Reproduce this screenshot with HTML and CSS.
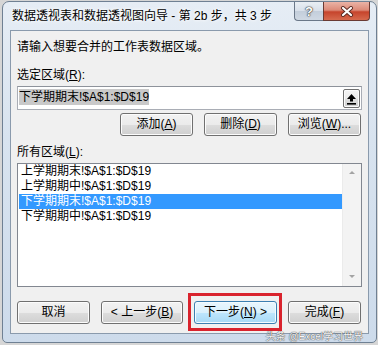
FILE: index.html
```html
<!DOCTYPE html>
<html>
<head>
    <title>数据透视表和数据透视图向导</title>
    <link rel="stylesheet" href="styles.css">
</head>
<body>
    <div class="window">
        <div class="titlebar">
            <span class="title">数据透视表和数据透视图向导 - 第 2b 步，共 3 步</span>
            <div class="caption-buttons">
                <span class="cap help">?</span>
                <span class="cap close">
                    <svg width="14" height="11" viewBox="0 0 14 11">
                        <path d="M3 2 L11 9 M11 2 L3 9" stroke="#5a2a22" stroke-width="4" stroke-linecap="round"/>
                        <path d="M3 2 L11 9 M11 2 L3 9" stroke="#ffffff" stroke-width="2.2" stroke-linecap="round"/>
                    </svg>
                </span>
            </div>
        </div>
        <div class="client">
            <p class="intro">请输入想要合并的工作表数据区域。</p>
            <div class="field-label">选定区域(<u>R</u>):</div>
            <div class="range-input">
                <span class="selected-text">下学期期末!$A$1:$D$19</span>
                <span class="collapse-btn">
                    <svg width="11" height="12" viewBox="0 0 11 12">
                        <path d="M5.5 1 L10 6 L7 6 L7 8.5 L4 8.5 L4 6 L1 6 Z" fill="#000"/>
                        <rect x="1" y="10" width="9" height="1.6" fill="#000"/>
                    </svg>
                </span>
            </div>
            <div class="btn-row top-row">
                <span class="btn">添加(<u>A</u>)</span>
                <span class="btn">删除(<u>D</u>)</span>
                <span class="btn">浏览(<u>W</u>)...</span>
            </div>
            <div class="field-label all-label">所有区域(<u>L</u>):</div>
            <div class="listbox">
                <ul class="items">
                    <li>上学期期末!$A$1:$D$19</li>
                    <li>上学期期中!$A$1:$D$19</li>
                    <li class="selected">下学期期末!$A$1:$D$19</li>
                    <li>下学期期中!$A$1:$D$19</li>
                </ul>
                <div class="scrollbar">
                    <span class="arrow up"></span>
                    <span class="arrow down"></span>
                </div>
            </div>
            <div class="btn-row bottom-row">
                <span class="btn cancel">取消</span>
                <span class="btn back">&lt; 上一步(<u>B</u>)</span>
                <span class="btn next highlighted">下一步(<u>N</u>) &gt;</span>
                <span class="btn">完成(<u>F</u>)</span>
            </div>
        </div>
        <div class="watermark">头条 @Excel学习世界</div>
    </div>
</body>
</html>
```

FILE: styles.css
```css
body {
    margin: 0;
    background-color: #d6d6d6;
    font-family: "Liberation Sans", "Noto Sans CJK SC", sans-serif;
    font-size: 12px;
    color: #000;
}
.window {
    position: relative;
    margin: 1px 0 0 2px;
    width: 375px;
    height: 342px;
    box-sizing: border-box;
    border: 1px solid #6f8093;
    border-radius: 7px 7px 5px 5px;
    background: linear-gradient(180deg, #e6edf5 0%, #d8e3ef 40%, #cddbeb 100%);
    padding: 0 7px 0 7px;
}
.titlebar {
    height: 28px;
    display: flex;
    justify-content: space-between;
    align-items: flex-start;
}
.title {
    margin-top: 6px;
    margin-left: 2px;
    line-height: 16px;
    font-size: 12px;
    text-shadow: 0 0 5px #fff, 0 0 3px #fff;
}
.caption-buttons {
    display: flex;
    margin-right: -1px;
}
.cap {
    height: 19px;
    box-sizing: border-box;
    display: flex;
    align-items: center;
    justify-content: center;
    border: 1px solid #6a7788;
    border-top: none;
}
.help {
    width: 29px;
    border-radius: 0 0 0 4px;
    border-right: none;
    background: linear-gradient(180deg, #e9eef4 0%, #d8e0ea 50%, #c3cedb 51%, #cfd8e3 100%);
    color: #fff;
    font-weight: bold;
    font-size: 13px;
    text-shadow: 0 0 1px #333, 0 0 1px #333, 0 0 2px #555;
}
.close {
    width: 47px;
    border-radius: 0 0 4px 0;
    border-color: #6a3a33;
    background: linear-gradient(180deg, #eab3a6 0%, #dc8a78 45%, #c6442c 55%, #d66a4e 100%);
}
.client {
    height: 304px;
    box-sizing: border-box;
    background-color: #f0f0f0;
    border: 1px solid #8a9aac;
    padding: 0 6px;
}
.intro {
    margin: 9px 0 0 0;
    line-height: 15px;
}
.field-label {
    margin-top: 13px;
    line-height: 15px;
}
.all-label {
    margin-top: 9px;
}
.range-input {
    margin-top: 3px;
    height: 24px;
    box-sizing: border-box;
    border: 1px solid #a9adb5;
    border-top-color: #8e939b;
    background-color: #fff;
    display: flex;
    align-items: flex-start;
    justify-content: space-between;
    padding: 2px 1px 0 1px;
}
.selected-text {
    background-color: #c9c9c9;
    line-height: 16px;
}
.collapse-btn {
    width: 17px;
    height: 19px;
    box-sizing: border-box;
    border: 1px solid #707070;
    border-radius: 2px;
    background: linear-gradient(180deg, #f4f4f4 0%, #ebebeb 50%, #dddddd 51%, #d2d2d2 100%);
    box-shadow: inset 0 0 0 1px #fbfbfb;
    display: flex;
    align-items: center;
    justify-content: center;
}
.btn-row {
    display: flex;
    justify-content: flex-end;
    gap: 11px;
    padding-right: 1px;
}
.top-row {
    margin-top: 3px;
}
.btn {
    width: 73px;
    height: 23px;
    box-sizing: border-box;
    border: 1px solid #707070;
    border-radius: 3px;
    background: linear-gradient(180deg, #f2f2f2 0%, #ebebeb 50%, #dddddd 51%, #cfcfcf 100%);
    box-shadow: inset 0 0 0 1px #fcfcfc;
    display: flex;
    align-items: center;
    justify-content: center;
    line-height: 15px;
}
.listbox {
    margin-top: 3px;
    height: 124px;
    box-sizing: border-box;
    border: 1px solid #828790;
    background-color: #fff;
    display: flex;
}
.items {
    list-style-type: none;
    margin: 0;
    padding: 0 0 0 1px;
    flex: 1;
}
.items li {
    height: 15px;
    line-height: 15px;
    padding-left: 2px;
}
.items li.selected {
    background-color: #3399ff;
    color: #fff;
}
.scrollbar {
    width: 18px;
    background-color: #f3f3f3;
    border-left: 1px solid #ebebeb;
    display: flex;
    flex-direction: column;
    justify-content: space-between;
    align-items: center;
    padding: 7px 0 8px 0;
}
.arrow {
    width: 0;
    height: 0;
    border-left: 3px solid transparent;
    border-right: 3px solid transparent;
}
.arrow.up {
    border-bottom: 3px solid #a3a3a3;
}
.arrow.down {
    border-top: 3px solid #a3a3a3;
}
.bottom-row {
    margin-top: 14px;
}
.cancel {
    margin-right: auto;
}
.back {
    width: 82px;
}
.next {
    width: 83px;
}
.highlighted {
    position: relative;
    border-color: #3c7fb1;
    background: linear-gradient(180deg, #eaf6fd 0%, #d9f0fc 50%, #bee6fd 51%, #a7d9f5 100%);
    box-shadow: inset 0 0 0 1px #f3fbff;
}
.highlighted::after {
    content: "";
    position: absolute;
    top: -9px;
    bottom: -8px;
    left: -7px;
    right: -6px;
    border: 3px solid #d9232d;
}
.watermark {
    position: absolute;
    right: 13px;
    bottom: 0;
    font-size: 10px;
    line-height: 11px;
    color: #f6f6f6;
    text-shadow: 0 0 1px #444, 0 0 1px #444;
}
```
